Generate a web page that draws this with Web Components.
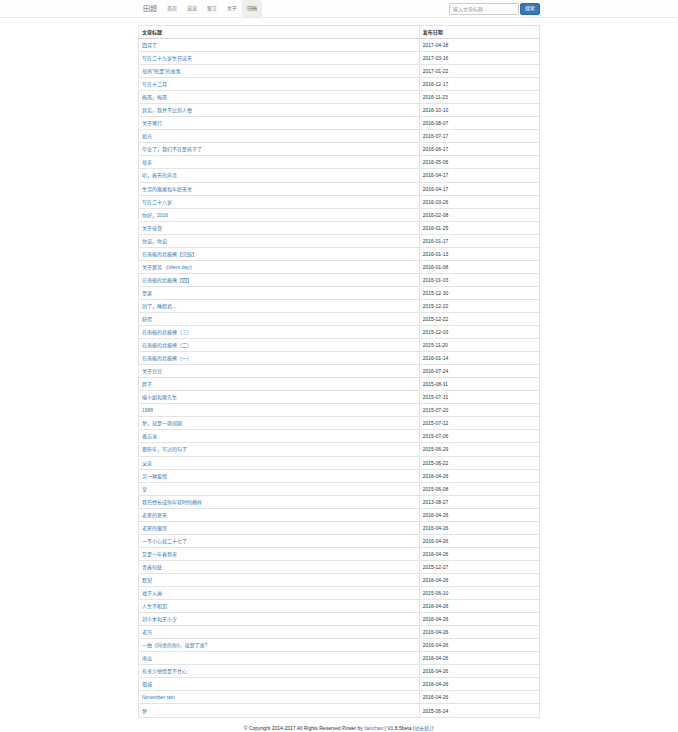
<!DOCTYPE html>
<html lang="zh-CN">
<head>
<meta charset="utf-8">
<meta name="viewport" content="width=device-width, initial-scale=1">
<title>归档 - 田超</title>
<style>
  body {
    margin: 0;
    background: #fff;
    color: #333;
    font: 5px/7px "Liberation Sans", "Noto Sans CJK SC", sans-serif;
  }
</style>
</head>
<body>
<blog-page>
  <blog-nav slot="nav"></blog-nav>
  <archive-table></archive-table>
  <blog-footer slot="footer"></blog-footer>
</blog-page>

<script>
class BlogElement extends HTMLElement {
  static register(name) {
    this.template = document.createElement('template');
    this.template.innerHTML = this.html;
    window.customElements.define(name, this);
  }
  constructor() {
    super();
    const shadowRoot = this.attachShadow({ mode: 'open' });
    shadowRoot.appendChild(this.constructor.template.content.cloneNode(true));
  }
}

class BlogPage extends BlogElement {
  static html = `
    <style>
      :host {
        display: flex;
        flex-direction: column;
        min-height: 100vh;
      }
      main {
        flex: 1;
        display: grid;
        box-sizing: border-box;
        width: 100%;
        max-width: 402px;
        margin: 7px auto 0;
      }
    </style>
    <slot name="nav"></slot>
    <main><slot></slot></main>
    <slot name="footer"></slot>
  `;
}

class BlogNav extends BlogElement {
  static html = `
    <style>
      :host {
        display: block;
        border-bottom: 1px solid #e7e7e7;
        background: #fefefe;
      }
      nav {
        display: flex;
        align-items: stretch;
        height: 17px;
        max-width: 402px;
        margin: 0 auto;
      }
      a {
        display: flex;
        align-items: center;
        padding: 0 5px;
        color: #777;
        text-decoration: none;
      }
      a.brand {
        font-size: 7px;
      }
      a.active {
        background: #eee;
        color: #555;
      }
      form {
        display: flex;
        align-items: center;
        gap: 1px;
        margin-left: auto;
      }
      input, button {
        box-sizing: border-box;
        height: 12px;
        margin: 0;
        border: 1px solid #ccc;
        border-radius: 2px;
        font: inherit;
      }
      input {
        width: 70px;
        padding: 0 3px;
        background: #fff;
        color: #555;
      }
      input::placeholder {
        color: #999;
      }
      button {
        padding: 0 4px;
        border-color: #2e6da4;
        background: #337ab7;
        color: #fff;
      }
    </style>
    <nav>
      <a class="brand" href="#">田超</a>
      <a href="#">首页</a>
      <a href="#">说说</a>
      <a href="#">留言</a>
      <a href="#">关于</a>
      <a class="active" href="#">归档</a>
      <form>
        <input type="text" aria-label="文章标题" placeholder="输入文章标题...">
        <button type="button">搜索</button>
      </form>
    </nav>
  `;
}

class ArchiveTable extends BlogElement {
  static html = `
    <style>
      :host {
        display: grid;
      }
      table {
        width: 100%;
        height: 100%;
        border-collapse: collapse;
        table-layout: fixed;
      }
      th, td {
        box-sizing: border-box;
        padding: 3px 3px 2px;
        border: 1px solid #e4e4e4;
        text-align: left;
        vertical-align: middle;
      }
      th {
        border-bottom-color: #d4d4d4;
      }
      th:first-child {
        width: 70%;
      }
      a {
        color: #337ab7;
        text-decoration: none;
      }
    </style>
    <table>
      <thead>
        <tr><th>文章标题</th><th>发布日期</th></tr>
      </thead>
      <tbody></tbody>
    </table>
  `;
  static posts = [
    ['四月了', '2017-04-18'],
    ['写在二十九岁生日这天', '2017-03-16'],
    ['母鸡"纸鸢"的故事', '2017-01-22'],
    ['写在十二月', '2016-12-17'],
    ['梅雨，梅雨', '2016-11-23'],
    ['其实，我并不比别人慢', '2016-10-10'],
    ['关于琴行', '2016-08-07'],
    ['拾光', '2016-07-17'],
    ['毕业了，我们不在是孩子了', '2016-06-17'],
    ['母亲', '2016-05-06'],
    ['听，春天的声音', '2016-04-17'],
    ['生活的艰难和年龄无关', '2016-04-17'],
    ['写在二十八岁', '2016-03-26'],
    ['你好，2016', '2016-02-08'],
    ['关于佳哥', '2016-01-25'],
    ['你说，你说', '2016-01-17'],
    ['在南极的北极熊【完结】', '2016-01-13'],
    ['关于那首 《silent day》', '2016-01-08'],
    ['在南极的北极熊【四】', '2016-01-03'],
    ['圣诞', '2015-12-30'],
    ['别了，睡假君...', '2015-12-22'],
    ['获得', '2015-12-22'],
    ['在南极的北极熊（三）', '2015-12-03'],
    ['在南极的北极熊（二）', '2015-11-20'],
    ['在南极的北极熊（一）', '2016-01-14'],
    ['关于豆豆', '2016-07-24'],
    ['胖子', '2015-08-11'],
    ['喵小姐和猪先生', '2015-07-31'],
    ['1988', '2015-07-20'],
    ['梦，就是一场闹剧', '2015-07-12'],
    ['备忘录', '2015-07-06'],
    ['那些年，写过的句子', '2015-06-29'],
    ['父亲', '2015-06-22'],
    ['另一种爱情', '2016-04-26'],
    ['草', '2015-06-08'],
    ['我已经长成你年轻时的模样', '2013-08-27'],
    ['老夏的夏天', '2016-04-26'],
    ['老夏的傻哥', '2016-04-26'],
    ['一不小心就二十七了', '2016-04-26'],
    ['又是一年春到来', '2016-04-26'],
    ['青春何处', '2015-12-27'],
    ['默契', '2016-04-26'],
    ['戏子入画', '2015-06-10'],
    ['人生不相见', '2016-04-26'],
    ['刘小木和王小夕', '2016-04-26'],
    ['老冯', '2016-04-26'],
    ['一曲《同桌的你》，寂寞了谁?', '2016-04-26'],
    ['南瓜', '2016-04-26'],
    ['有多少感情是不甘心', '2016-04-26'],
    ['孤城', '2016-04-26'],
    ['November rain', '2016-04-26'],
    ['梦', '2015-06-24'],
  ];
  connectedCallback() {
    const rows = ArchiveTable.posts.map(([title, date]) => {
      const row = document.createElement('tr');
      const link = document.createElement('a');
      link.href = '#';
      link.textContent = title;
      row.insertCell().append(link);
      row.insertCell().append(date);
      return row;
    });
    this.shadowRoot.querySelector('tbody').replaceChildren(...rows);
  }
}

class BlogFooter extends BlogElement {
  static html = `
    <style>
      :host {
        display: block;
        padding: 7px 0 0;
        text-align: center;
      }
      a {
        color: #337ab7;
        text-decoration: none;
      }
    </style>
    <footer>© Copyright 2014-2017 All Rights Reserved Power by <a href="#">tianchao</a> | V1.8.5beta |<a href="#">站长统计</a></footer>
  `;
}

BlogPage.register('blog-page');
BlogNav.register('blog-nav');
ArchiveTable.register('archive-table');
BlogFooter.register('blog-footer');
</script>
</body>
</html>
